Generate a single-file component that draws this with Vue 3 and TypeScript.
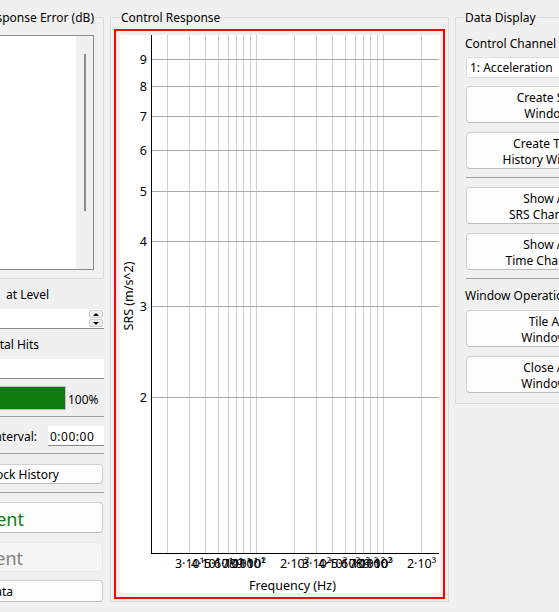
<script setup lang="ts">
const logX = (f: number): number => Math.floor(256.3 + 127 * Math.log10(f / 100)) + 0.5
const logY = (v: number): number => Math.floor(397.3 - 517 * Math.log10(v / 2)) + 0.5

const freqs: number[] = [20, 30, 40, 50, 60, 70, 80, 90, 100, 200, 300, 400, 500, 600, 700, 800, 900, 1000, 2000]
const vLines = freqs.map(logX)
const sup = (f: number): string => (f < 100 ? '¹' : f < 1000 ? '²' : '³')
const xTicks = freqs
  .filter((f) => f !== 20)
  .map((f) => {
    const lead = String(f)[0]
    const pow = f === 100 || f === 1000
    return { x: logX(f), text: pow ? `10${sup(f)}` : `${lead}·10${sup(f)}` }
  })
const yTicks = [2, 3, 4, 5, 6, 7, 8, 9].map((v) => ({ v, y: logY(v) }))

const displayGroups = [
  { id: 'a', buttons: [['Create SRS', 'Window'], ['Create Time', 'History Window']] },
  { id: 'b', buttons: [['Show All', 'SRS Channels'], ['Show All', 'Time Channels']] },
]
const windowButtons = [['Tile All', 'Windows'], ['Close All', 'Windows']]
</script>

<template>
  <div class="page">
    <aside class="left">
      <section class="group error-group">
        <h3 class="title title-end">Control Response Error (dB)</h3>
        <div class="listbox">
          <div class="list-body"></div>
          <div class="scroll"><div class="thumb"></div></div>
        </div>
      </section>

      <div class="label label-level">at Level</div>
      <div class="field spin">
        <div class="spin-btns">
          <button class="spin-btn"><span class="up"></span></button>
          <button class="spin-btn"><span class="down"></span></button>
        </div>
      </div>

      <div class="label label-hits">Total Hits</div>
      <div class="field"></div>

      <div class="progress-row">
        <div class="progress"></div>
        <span class="pct">100%</span>
      </div>
      <hr class="sep sep-a" />

      <div class="interval-row">
        <span class="interval-label">Pulse Interval:</span>
        <div class="field time">0:00:00</div>
      </div>
      <hr class="sep sep-b" />

      <button class="btn btn-history">Shock History</button>
      <hr class="sep sep-c" />

      <button class="btn big start">Start Experiment</button>
      <button class="btn big stop">Stop Experiment</button>
      <button class="btn btn-data">Export Data</button>
    </aside>

    <section class="group plot-group">
      <h3 class="title">Control Response</h3>
      <div class="frame">
        <svg class="plot" viewBox="120 35 320 558" width="320" height="558">
          <rect x="120" y="35" width="320" height="558" fill="#fff" />
          <line v-for="x in vLines" :key="x" :x1="x" :x2="x" y1="35" y2="553" class="grid-v" />
          <line v-for="t in yTicks" :key="t.v" x1="151" x2="439" :y1="t.y" :y2="t.y" class="grid-h" />
          <line x1="151.5" x2="151.5" y1="35" y2="553.5" class="axis" />
          <line x1="151" x2="439" y1="553.5" y2="553.5" class="axis" />
          <text v-for="t in yTicks" :key="'y' + t.v" x="147" :y="t.y + 4.5" text-anchor="end" class="tick">{{ t.v }}</text>
          <text v-for="t in xTicks" :key="'x' + t.x" :x="t.x" y="568" text-anchor="middle" class="tick">{{ t.text }}</text>
          <text x="292.5" y="590" text-anchor="middle" class="tick">Frequency (Hz)</text>
          <text x="133" y="296" text-anchor="middle" transform="rotate(-90 133 296)" class="tick">SRS (m/s^2)</text>
        </svg>
      </div>
    </section>

    <aside class="group right">
      <h3 class="title">Data Display</h3>
      <div class="right-label first">Control Channel</div>
      <div class="select">1: Acceleration</div>
      <template v-for="g in displayGroups" :key="g.id">
        <button v-for="b in g.buttons" :key="b[0] + b[1]" class="btn tall">{{ b[0] }}<br />{{ b[1] }}</button>
        <hr class="sep right-sep" />
      </template>
      <div class="right-label">Window Operations</div>
      <button v-for="b in windowButtons" :key="b[0]" class="btn tall">{{ b[0] }}<br />{{ b[1] }}</button>
    </aside>
  </div>
</template>

<style scoped>
.page {
  width: 559px;
  height: 612px;
  overflow: hidden;
  background: #f0f0f0;
  display: flex;
  align-items: flex-start;
  font-family: "Noto Sans", sans-serif;
  font-size: 12px;
  line-height: 16px;
  color: #000;
}
.left {
  flex: 0 0 176px;
  min-width: 0;
  width: 176px;
  margin-left: -72px;
  margin-top: 17px;
  display: flex;
  flex-direction: column;
}
.group {
  box-sizing: border-box;
  border: 1px solid #dcdcdc;
}
.title {
  height: 16px;
  margin: -9px 0 0 9px;
  padding: 0 1px;
  width: fit-content;
  font: inherit;
  line-height: 18px;
  background: #f0f0f0;
  white-space: nowrap;
}
.title-end {
  margin-left: auto;
  margin-right: 8px;
}
.error-group {
  height: 262px;
  width: 176px;
  flex: none;
}
.listbox {
  box-sizing: border-box;
  height: 235px;
  margin: 10px 9px 0 4px;
  border: 1px solid #8a8a8e;
  display: flex;
}
.list-body {
  flex: 1;
  background: #fff;
}
.scroll {
  width: 17px;
  background: #f0f0f0;
  display: flex;
  justify-content: center;
}
.thumb {
  width: 2px;
  height: 157px;
  margin-top: 18px;
  background: #8a8a8a;
}
.label {
  margin-top: 7px;
  text-align: right;
  white-space: nowrap;
  height: 16px;
  line-height: 18px;
}
.label-level {
  padding-right: 55px;
}
.label-hits {
  padding-right: 65px;
}
.field {
  box-sizing: border-box;
  height: 20px;
  margin-top: 7px;
  background: #fff;
  border-bottom: 1px solid #8a8a8a;
}
.spin {
  display: flex;
  justify-content: flex-end;
  align-items: center;
}
.spin-btns {
  display: flex;
  flex-direction: column;
  gap: 1px;
  margin-right: 1px;
}
.spin-btn {
  width: 14px;
  height: 8px;
  padding: 0;
  border: 1px solid #d0d0d0;
  border-radius: 2px;
  background: #f3f3f3;
  display: flex;
  align-items: center;
  justify-content: center;
}
.up {
  border: 3px solid transparent;
  border-top: 0;
  border-bottom: 3px solid #000;
}
.down {
  border: 3px solid transparent;
  border-bottom: 0;
  border-top: 3px solid #000;
}
.progress-row {
  margin-top: 7px;
  height: 24px;
  display: flex;
  align-items: flex-end;
}
.progress {
  box-sizing: border-box;
  flex: 1;
  height: 24px;
  background: #107c10;
  border: 1px solid #bcbcbc;
}
.pct {
  flex: 0 0 36px;
  margin-left: 2px;
  line-height: 20px;
}
.sep {
  margin: 0;
  border: 0;
  height: 1px;
  background: #a0a0a0;
  flex: none;
}
.sep-a {
  margin-top: 6px;
}
.interval-row {
  margin-top: 9px;
  display: flex;
  justify-content: flex-end;
  gap: 11px;
}
.interval-label {
  flex: none;
  white-space: nowrap;
  line-height: 22px;
  height: 20px;
}
.time {
  flex: 0 0 56px;
  margin-top: 0;
  padding-left: 2px;
  line-height: 22px;
  letter-spacing: 0.5px;
  white-space: nowrap;
}
.sep-b {
  margin-top: 7px;
}
.sep-c {
  margin-top: 8px;
}
.btn {
  box-sizing: border-box;
  font: inherit;
  color: #000;
  background: #fdfdfd;
  border: 1px solid #d0d0d0;
  border-bottom-color: #bcbcbc;
  border-radius: 4px;
  padding: 0;
  white-space: nowrap;
  flex: none;
}
.left .btn {
  margin-right: 1px;
  display: flex;
  align-items: center;
  justify-content: flex-end;
}
.btn-history {
  height: 20px;
  margin-top: 10px;
  padding: 2px 43px 0 0 !important;
}
.big {
  height: 31px;
  margin-top: 9px;
  font-size: 18px;
  line-height: 24px;
}
.start {
  color: #107c10;
  padding: 2px 78px 0 0 !important;
}
.stop {
  height: 30px;
  color: #808080;
  background: #f5f5f5;
  border-color: #e8e8e8;
  padding: 2px 79px 0 0 !important;
}
.btn-data {
  height: 22px;
  margin-top: 8px;
  padding: 2px 89px 0 0 !important;
}
.plot-group {
  flex: 0 0 339px;
  min-width: 0;
  height: 585px;
  margin: 17px 0 0 6px;
}
.frame {
  box-sizing: border-box;
  width: 331px;
  height: 570px;
  margin: 4px 0 0 3px;
  border: 2px solid #ff0000;
  padding: 4px 3px 4px 4px;
  background: #f0f0f0;
}
.plot {
  display: block;
}
.grid-v {
  stroke: #cfcfcf;
  stroke-width: 1;
  shape-rendering: crispEdges;
}
.grid-h {
  stroke: #a9a9a9;
  stroke-width: 1;
  shape-rendering: crispEdges;
}
.axis {
  stroke: #000;
  stroke-width: 1;
  shape-rendering: crispEdges;
}
.tick {
  font-family: "Noto Sans", sans-serif;
  font-size: 12.5px;
  fill: #000;
}
.right {
  flex: 0 0 184px;
  min-width: 0;
  height: 387px;
  margin: 17px 0 0 6px;
  padding: 0 10px;
  display: flex;
  flex-direction: column;
}
.right .title {
  margin-left: -2px;
}
.right-label {
  white-space: nowrap;
  height: 16px;
  line-height: 18px;
  margin: 8px 0 0 -1px;
}
.right-label.first {
  margin-top: 10px;
}
.select {
  box-sizing: border-box;
  height: 21px;
  margin-top: 6px;
  padding-left: 3px;
  background: #fff;
  border: 1px solid #dcdcdc;
  border-radius: 2px;
  line-height: 20px;
  white-space: nowrap;
}
.tall {
  height: 37px;
  margin-top: 7px;
  padding-top: 2px;
  text-align: center;
  line-height: 16px;
}
.select + .tall {
  margin-top: 8px;
}
.tall + .tall {
  margin-top: 9px;
}
.right-sep {
  margin-top: 8px;
}
.right-sep + .tall {
  margin-top: 9px;
}
.right-label + .tall {
  margin-top: 7px;
}
</style>
